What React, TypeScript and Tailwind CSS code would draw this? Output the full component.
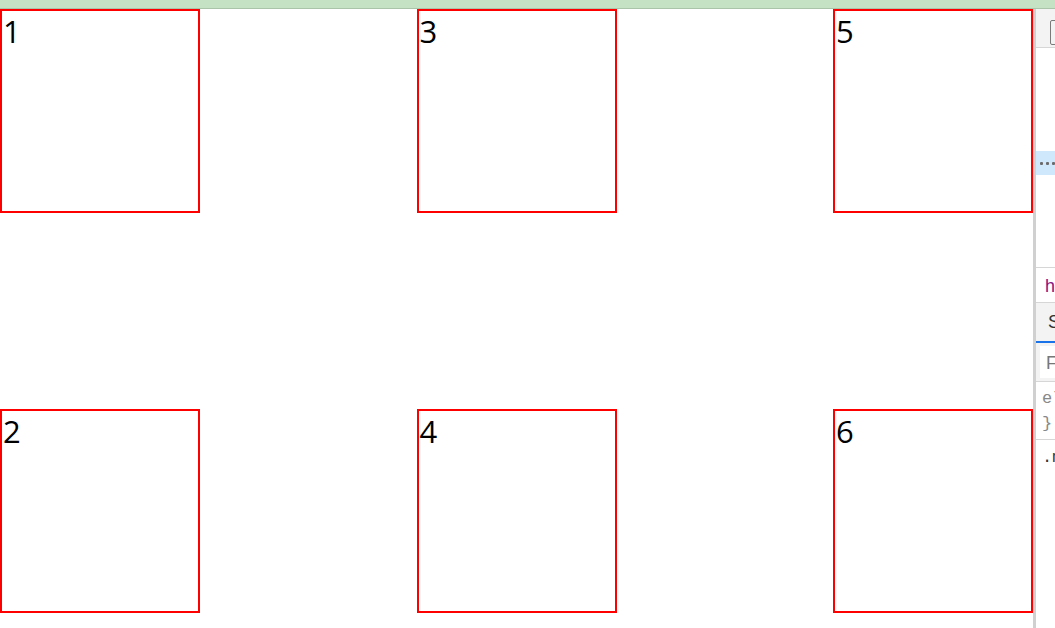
const boxes = ['1', '2', '3', '4', '5', '6'];

function DevtoolsSliver() {
  return (
    <div className="flex-1 min-w-0 overflow-hidden border-l-[3px] border-[#d0d0d0] bg-white text-[13px] leading-none font-['Liberation_Sans',sans-serif] flex flex-col">
      {/* toolbar */}
      <div className="h-[39px] shrink-0 bg-[#f3f3f3] border-b border-[#d6d6d6] flex items-start pt-[11px] pl-[14px]">
        <div className="w-[16px] h-[25px] shrink-0 rounded-[2px] border-[1.5px] border-[#7a7a7a]" />
      </div>
      {/* dom tree */}
      <div className="h-[103px] shrink-0" />
      <div className="h-[24px] shrink-0 bg-[#cfe8fc] flex items-center gap-[3px] pl-[4px]">
        <span className="w-[3px] h-[3px] rounded-[1px] bg-[#6b6b6b] shrink-0" />
        <span className="w-[3px] h-[3px] rounded-[1px] bg-[#6b6b6b] shrink-0" />
        <span className="w-[3px] h-[3px] rounded-[1px] bg-[#6b6b6b] shrink-0" />
      </div>
      <div className="h-[92px] shrink-0" />
      {/* breadcrumb */}
      <div className="h-[35px] shrink-0 border-t border-[#d6d6d6] flex items-center pl-[9px] pt-[2px] text-[#881280] text-[18px] whitespace-nowrap">
        html
      </div>
      {/* tabs */}
      <div className="h-[41px] shrink-0 border-t border-[#d6d6d6] bg-[#f3f3f3] flex flex-col">
        <div className="flex-1 flex items-center pl-[12px] text-[#333] text-[18px] whitespace-nowrap">Styles</div>
        <div className="h-[2px] bg-[#1a73e8]" />
      </div>
      {/* filter */}
      <div className="h-[38px] shrink-0 bg-[#f3f3f3] flex items-stretch py-[3px] pl-[4px]">
        <div className="flex-1 bg-white flex items-center pl-[6px] pt-[2px] text-[#777] text-[18px] whitespace-nowrap">Filter</div>
      </div>
      {/* styles */}
      <div className="border-t border-[#d6d6d6] pt-[4px] pb-[3px] pl-[6px] font-['Liberation_Mono',monospace] text-[17px] text-[#888] leading-[25px] whitespace-nowrap">
        <div>element.style {'{'}</div>
        <div>{'}'}</div>
      </div>
      <div className="border-t border-[#d6d6d6] pt-[9px] pl-[6px] font-['Liberation_Mono',monospace] text-[17px] text-[#333] whitespace-nowrap">
        .main {'{'}
      </div>
    </div>
  );
}

export default function App() {
  return (
    <div className="w-[1055px] h-[628px] overflow-hidden flex flex-col bg-white">
      <div className="h-[9px] shrink-0 bg-[#c5e2c5] border-b border-[#a9c4a9]" />
      <div className="flex-1 flex min-h-0">
        <div className="w-[1033px] shrink-0 grid grid-flow-col grid-rows-[204px_204px] grid-cols-[200px_200px_200px] justify-between gap-y-[196px] content-start">
          {boxes.map((b) => (
            <div
              key={b}
              className="border-2 border-[#ff0000] text-[31px] leading-[40px] text-black font-['Open_Sans',sans-serif] pl-[1px]"
            >
              {b}
            </div>
          ))}
        </div>
        <DevtoolsSliver />
      </div>
    </div>
  );
}
